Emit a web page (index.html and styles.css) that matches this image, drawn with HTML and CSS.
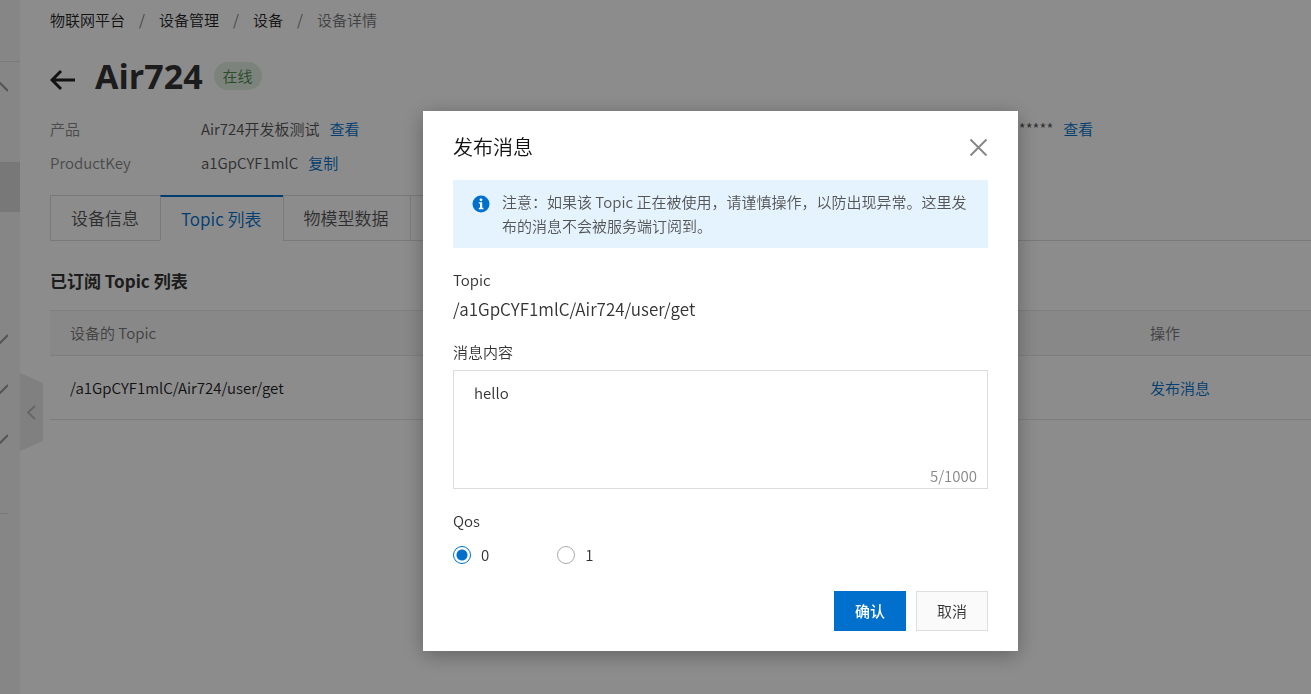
FILE: index.html
```html
<!DOCTYPE html>
<html lang="zh-CN">
<head>
<meta charset="utf-8">
<meta name="viewport" content="width=device-width, initial-scale=1">
<title>设备详情</title>
<link rel="stylesheet" href="styles.css">
</head>
<body>
<div class="app">
  <aside class="sidebar">
    <div class="sidebar-head"></div>
    <div class="sidebar-row"><svg class="chevron" viewBox="0 0 16 10"><path d="M1 9 8 1l8 8"/></svg></div>
    <div class="sidebar-row"></div>
    <div class="sidebar-row sidebar-row-active"></div>
    <div class="sidebar-row"></div>
    <div class="sidebar-row"></div>
    <div class="sidebar-group">
      <div class="sidebar-row"><svg class="chevron" viewBox="0 0 16 10"><path d="M1 1l7 8 8-8"/></svg></div>
      <div class="sidebar-row"><svg class="chevron" viewBox="0 0 16 10"><path d="M1 1l7 8 8-8"/></svg></div>
      <div class="sidebar-row"><svg class="chevron" viewBox="0 0 16 10"><path d="M1 1l7 8 8-8"/></svg></div>
      <div class="sidebar-row sidebar-row-last"></div>
    </div>
    <button class="collapse" type="button" aria-label="收起"><svg width="9" height="15" viewBox="0 0 9 15"><path d="M8 1 1 7.500l7 6.500"/></svg></button>
  </aside>

  <main class="main">
    <nav class="breadcrumb">
      <a href="#">物联网平台</a><span class="slash">/</span>
      <a href="#">设备管理</a><span class="slash">/</span>
      <a href="#">设备</a><span class="slash">/</span>
      <span class="current">设备详情</span>
    </nav>

    <header class="page-head">
      <button class="back" type="button" aria-label="返回"><svg width="26" height="22" viewBox="0 0 26 22"><path d="M25 11H2M11 2 2 11l9 9"/></svg></button>
      <h1 class="page-title">Air724</h1>
      <span class="status">在线</span>
    </header>

    <div class="details">
      <span class="detail-name">产品</span>
      <span class="detail-value">Air724开发板测试<a class="link" href="#">查看</a></span>
      <span class="detail-value">*******<a class="link" href="#">查看</a></span>
      <span class="detail-name">ProductKey</span>
      <span class="detail-value">a1GpCYF1mlC<a class="link" href="#">复制</a></span>
    </div>

    <div class="tabs">
      <button class="tab" type="button">设备信息</button>
      <button class="tab tab-active" type="button">Topic 列表</button>
      <button class="tab" type="button">物模型数据</button>
      <div class="tab-next"></div>
    </div>

    <h2 class="section-title">已订阅 Topic 列表</h2>
    <table class="table">
      <thead><tr><th>设备的 Topic</th><th class="col-action">操作</th></tr></thead>
      <tbody><tr><td>/a1GpCYF1mlC/Air724/user/get</td><td><a class="link-plain" href="#">发布消息</a></td></tr></tbody>
    </table>
  </main>
</div>

<div class="overlay">
  <form class="dialog" role="dialog" aria-labelledby="dialog-title">
    <div class="dialog-head">
      <h2 class="dialog-title" id="dialog-title">发布消息</h2>
      <button class="close" type="button" aria-label="关闭"><svg width="19" height="19" viewBox="0 0 19 19"><path d="M1.500 1.500l16 16M17.500 1.500l-16 16"/></svg></button>
    </div>
    <div class="notice">
      <svg class="notice-icon" width="18" height="18" viewBox="0 0 18 18"><circle cx="9" cy="9" r="8.500" fill="#0070cc"/><circle cx="9" cy="4.800" r="1.400" fill="#fff"/><path d="M6.800 7.200h3.400v5.600h1.200v1.400H6.800v-1.400H8V8.600H6.800z" fill="#fff"/></svg>
      <p class="notice-text">注意：如果该 Topic 正在被使用，请谨慎操作，以防出现异常。这里发布的消息不会被服务端订阅到。</p>
    </div>
    <div class="label">Topic</div>
    <div class="topic">/a1GpCYF1mlC/Air724/user/get</div>
    <label class="label" for="message">消息内容</label>
    <div class="message">
      <textarea class="message-input" id="message" maxlength="1000">hello</textarea>
      <span class="count">5/1000</span>
    </div>
    <div class="label" id="qos">Qos</div>
    <div class="radios" role="radiogroup" aria-labelledby="qos">
      <label class="radio"><input type="radio" name="qos" value="0" checked>0</label>
      <label class="radio"><input type="radio" name="qos" value="1">1</label>
    </div>
    <div class="actions">
      <button class="button button-primary" type="button">确认</button>
      <button class="button" type="button">取消</button>
    </div>
  </form>
</div>
</body>
</html>
```
FILE: styles.css
```css
* { box-sizing: border-box; }

body {
  margin: 0;
  color: #333;
  background: #fff;
  font: 15px/24px "Noto Sans CJK SC", "Noto Sans", sans-serif;
  font-weight: 350;
}

button, textarea { font: inherit; color: inherit; }
button { padding: 0; border: 0; background: none; }
a { color: inherit; text-decoration: none; }
h1, h2, p { margin: 0; }
svg { display: block; fill: none; flex: none; }

.app { display: flex; min-height: 100vh; }

.sidebar { position: relative; flex: none; width: 20px; background: #f4f4f4; }
.sidebar-head { height: 62px; border-bottom: 1px solid #dedede; }
.sidebar-row {
  display: flex;
  align-items: center;
  justify-content: flex-end;
  height: 50px;
  padding-right: 12px;
  overflow: hidden;
}
.sidebar-row-active { background: #dadada; }
.sidebar-group { padding-top: 2px; }
.sidebar-row-last { width: 8px; padding: 0; border-bottom: 1px solid #dadada; }
.chevron { width: 16px; height: 10px; stroke: #999; stroke-width: 2; }
.collapse {
  position: absolute;
  left: 20px;
  top: 373px;
  display: grid;
  place-items: center;
  width: 23px;
  height: 78px;
  background: #eaeaea;
  clip-path: polygon(0 0, 100% 10px, 100% 68px, 0 100%);
}
.collapse svg { stroke: #bbb; stroke-width: 2; }

.main { flex: 1; min-width: 0; padding: 8px 0 0 30px; }

.breadcrumb { display: flex; color: #222; }
.slash { width: 34px; text-align: center; color: #777; }
.current { color: #777; }

.page-head { display: flex; align-items: center; height: 48px; margin-top: 20px; }
.back { margin-top: 8px; }
.back svg { stroke: #222; stroke-width: 3; }
.page-title { margin-left: 19px; color: #333; font: 700 34px/48px "Open Sans", sans-serif; }
.status {
  height: 28px;
  margin-left: 11px;
  padding: 0 9px;
  border-radius: 14px;
  color: #4c8a4c;
  background: #e2eee2;
  line-height: 28px;
}

.details { display: grid; grid-template-columns: 151px 1fr 306px; row-gap: 10px; margin-top: 17px; }
.detail-name { color: #888; }
.detail-value { color: #555; }
.link { margin-left: 10px; color: #0070cc; }
.link-plain { color: #0070cc; }

.tabs { display: flex; height: 46px; margin-top: 20px; border-bottom: 1px solid #dedede; }
.tab {
  height: 46px;
  padding: 0 21px 0 20px;
  border: 1px solid #dedede;
  border-right-width: 0;
  color: #555;
  font-size: 17px;
}
.tab-active { border-top: 2px solid #0070cc; border-bottom-color: #fff; color: #0070cc; }
.tab-next { flex: 0 1 110px; border: 1px solid #dedede; border-bottom: 0; }

.section-title { margin: 28px 0 17px; font-size: 17px; line-height: 24px; }

.table { width: 100%; border-collapse: separate; border-spacing: 0; table-layout: fixed; }
.table th, .table td { padding: 0 20px; border-bottom: 1px solid #e6e6e6; text-align: left; }
.table th { height: 46px; border-top: 1px solid #e6e6e6; color: #777; background: #f8f8f8; font-weight: 350; }
.table td { height: 64px; color: #222; }
.table .col-action { width: 181px; }

.overlay {
  position: fixed;
  inset: 0;
  display: flex;
  align-items: flex-start;
  justify-content: center;
  padding: 111px 0 0 130px;
  background: rgba(0, 0, 0, 0.45);
}
.dialog {
  width: 595px;
  padding: 20px 30px;
  background: #fff;
  box-shadow: 0 4px 20px rgba(0, 0, 0, 0.3);
}
.dialog-head { display: flex; align-items: center; justify-content: space-between; height: 32px; margin-bottom: 17px; }
.dialog-title { color: #111; font-size: 20px; font-weight: 350; line-height: 32px; }
.close svg { stroke: #888; stroke-width: 2; }

.notice { display: flex; gap: 12px; margin-bottom: 20px; padding: 10px 19px; background: #e5f3ff; color: #555; }
.notice-icon { margin-top: 5px; }
.label { display: block; line-height: 24px; }
.topic { margin: 4px 0 18px; font-size: 17px; line-height: 26px; }

.message {
  display: flex;
  flex-direction: column;
  height: 119px;
  margin: 6px 0 20px;
  border: 1px solid #dcdcdc;
}
.message-input { flex: 1; padding: 10px 20px; border: 0; outline: 0; resize: none; background: none; }
.count { padding-right: 10px; text-align: right; color: #888; }

.radios { display: flex; gap: 68px; margin-top: 10px; }
.radio { display: flex; align-items: center; gap: 10px; }
.radio input {
  appearance: none;
  width: 18px;
  height: 18px;
  margin: 0;
  border: 1px solid #aaa;
  border-radius: 50%;
}
.radio input:checked { border-color: #0070cc; background: radial-gradient(#0070cc 5px, #fff 6px); }

.actions { display: flex; justify-content: flex-end; gap: 10px; margin-top: 24px; }
.button { height: 40px; padding: 0 20px; border: 1px solid #dedede; background: #fafafa; }
.button-primary { border-color: #0070cc; background: #0070cc; color: #fff; font-weight: 500; }
```
